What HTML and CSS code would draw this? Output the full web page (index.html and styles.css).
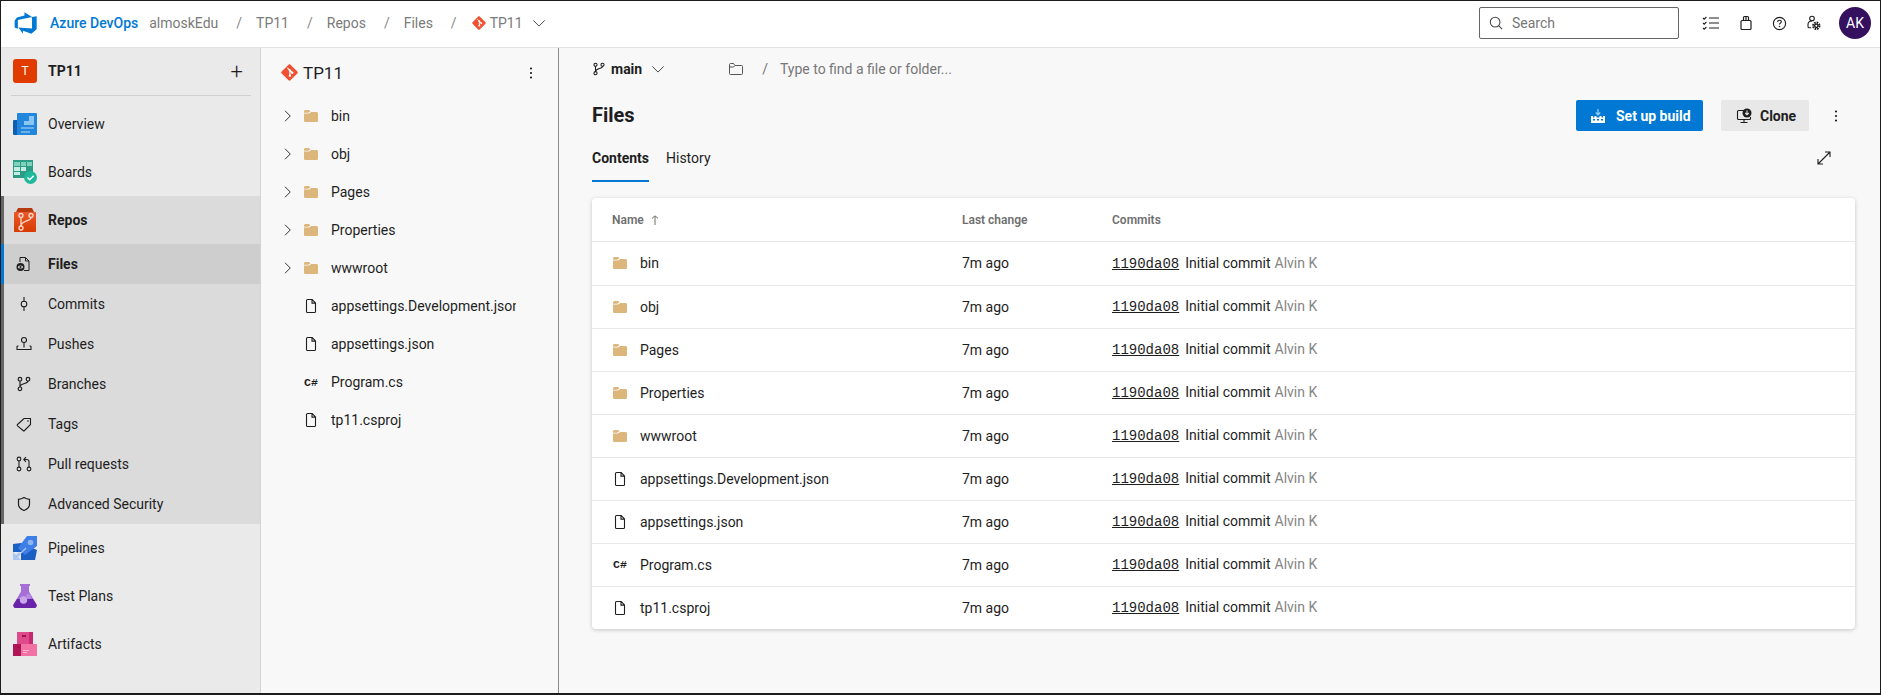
FILE: index.html
```html
<!DOCTYPE html>
<html lang="en">
<head>
    <meta charset="UTF-8">
    <title>Files - Repos</title>
    <link rel="stylesheet" href="styles.css">
</head>
<body>
<svg class="defs" width="0" height="0">
    <symbol id="folder" viewBox="0 0 16 16">
        <path fill="#dcb67a" d="M1 3.600C1 2.700 1.700 2 2.600 2h3c.5 0 .9.2 1.200.6l.6.7-2.200 1.500H1zM1 5.600h5l2.400-1.700h5c.9 0 1.600.7 1.600 1.600v6.900c0 .9-.7 1.600-1.600 1.600H2.600C1.700 14 1 13.300 1 12.400z"/>
    </symbol>
    <symbol id="file" viewBox="0 0 16 16">
        <path fill="none" stroke="#1e1e1e" stroke-width="1.100" d="M3.500 2.600c0-.6.500-1.100 1.100-1.100h4.600l3.300 3.400v8.500c0 .6-.5 1.100-1.100 1.100H4.600c-.6 0-1.100-.5-1.100-1.100zM9 1.600v3.500h3.400"/>
    </symbol>
    <symbol id="git" viewBox="0 0 16 16">
        <path fill="#f05133" d="M.6 7.100 7.100.6c.5-.5 1.300-.5 1.800 0l6.500 6.500c.5.5.5 1.300 0 1.800l-6.500 6.500c-.5.5-1.300.5-1.800 0L.6 8.900c-.5-.5-.5-1.300 0-1.800z"/>
        <path fill="none" stroke="#fff" stroke-width="1.100" d="M6 3.600l2.400 2.400M8.400 6v5M8.400 6l2.200 2.200"/>
        <circle cx="8.400" cy="6" r="1.100" fill="#fff"/><circle cx="8.400" cy="11" r="1.100" fill="#fff"/><circle cx="10.600" cy="8.200" r="1.100" fill="#fff"/>
    </symbol>
    <symbol id="branch" viewBox="0 0 16 16">
        <g fill="none" stroke="#1e1e1e" stroke-width="1.200">
            <circle cx="4" cy="3.200" r="1.800"/><circle cx="4" cy="12.800" r="1.800"/><circle cx="12" cy="3.200" r="1.800"/>
            <path d="M4 5v6M12 5c0 3-8 2-8 6"/>
        </g>
    </symbol>
    <symbol id="chev-right" viewBox="0 0 16 16">
        <path fill="none" stroke="#1e1e1e" stroke-width="1.200" d="M4 1 11 8l-7 7"/>
    </symbol>
    <symbol id="chev-down" viewBox="0 0 16 16">
        <path fill="none" stroke="#444" stroke-width="1.100" d="M1.500 5 8 11.500 14.500 5"/>
    </symbol>
    <symbol id="kebab" viewBox="0 0 16 16">
        <circle cx="8" cy="3.500" r="1.100" fill="#1e1e1e"/><circle cx="8" cy="8" r="1.100" fill="#1e1e1e"/><circle cx="8" cy="12.500" r="1.100" fill="#1e1e1e"/>
    </symbol>
    <linearGradient id="repos-fill" x1="0" y1="0" x2="0" y2="1">
        <stop offset="0" stop-color="#e8592b"/>
        <stop offset="1" stop-color="#d83b01"/>
    </linearGradient>
</svg>

<header class="topbar">
    <svg class="logo" viewBox="0 0 18 18" width="24" height="24">
        <path fill="#0078d4" d="M17 4v9.740l-4 3.280-6.200-2.260V17L3.290 12.410l10.230.8V4.440zm-3.410.49L7.850 1v2.290L2.250 4.940.5 7.200v5.120l2.400 1.060V6.810z"/>
    </svg>
    <span class="brand">Azure DevOps</span>
    <span class="crumb org">almoskEdu</span>
    <span class="sep">/</span><span class="crumb">TP11</span>
    <span class="sep">/</span><span class="crumb">Repos</span>
    <span class="sep">/</span><span class="crumb">Files</span>
    <span class="sep">/</span>
    <svg class="crumb-git" width="14" height="14"><use href="#git"/></svg>
    <span class="crumb">TP11</span>
    <svg class="crumb-chev" width="14" height="14"><use href="#chev-down"/></svg>

    <div class="top-right">
        <div class="search">
            <svg viewBox="0 0 16 16" width="14" height="14"><path fill="none" stroke="#444" stroke-width="1.200" d="M7 1.500a5.500 5.500 0 1 1 0 11 5.500 5.500 0 0 1 0-11zM11 11l4 4"/></svg>
            <span>Search</span>
        </div>
        <svg class="top-icon" viewBox="0 0 18 16" width="18" height="16"><path fill="none" stroke="#1e1e1e" stroke-width="1.100" d="M7 3h10M7 8h10M7 13h10M1 3l1.200 1.200L4.400 2M1 8l1.200 1.200L4.400 7M1 13l1.200 1.200L4.400 12"/></svg>
        <svg class="top-icon" viewBox="0 0 16 16" width="16" height="16"><path fill="none" stroke="#1e1e1e" stroke-width="1.200" d="M3 6.500c0-.6.400-1 1-1h8c.6 0 1 .4 1 1v7c0 .6-.4 1-1 1H4c-.6 0-1-.4-1-1zM5.500 5.500V2.500c0-.6.400-1 1-1h3c.6 0 1 .4 1 1v3M8 1.500v4"/></svg>
        <svg class="top-icon" viewBox="0 0 16 16" width="15" height="15"><circle cx="8" cy="8" r="6.500" fill="none" stroke="#1e1e1e" stroke-width="1.200"/><path fill="none" stroke="#1e1e1e" stroke-width="1.200" d="M6 6.300c0-1.100.9-1.800 2-1.800s2 .7 2 1.700c0 1.300-2 1.400-2 2.900"/><circle cx="8" cy="11.300" r=".8" fill="#1e1e1e"/></svg>
        <svg class="top-icon" viewBox="0 0 16 16" width="16" height="16"><g fill="none" stroke="#1e1e1e" stroke-width="1.100"><circle cx="7" cy="3.500" r="2.300"/><path d="M7 6c-2.500 0-4 1.500-4 3.500v2c0 .8.500 1.300 1.200 1.300h2"/></g><circle cx="11.300" cy="10.800" r="3.200" fill="none" stroke="#1e1e1e" stroke-width="2" stroke-dasharray="1.600 .9"/><circle cx="11.300" cy="10.800" r="2.400" fill="#1e1e1e"/><circle cx="11.300" cy="10.800" r="1" fill="#fff"/></svg>
        <div class="avatar">AK</div>
    </div>
</header>

<div class="layout">
    <nav class="sidebar">
        <div class="project">
            <span class="project-badge">T</span>
            <span class="project-name">TP11</span>
            <span class="project-add">+</span>
        </div>
        <a class="nav-item">
            <svg class="nav-icon" viewBox="0 0 24 24"><path fill="#0f5fb0" d="M0 9a1 1 0 0 1 1-1h8v15H1a1 1 0 0 1-1-1z"/><path fill="#2287dc" d="M4 2a1 1 0 0 1 1-1h18a1 1 0 0 1 1 1v20a1 1 0 0 1-1 1H4z"/><path fill="#8cc4f2" d="M16 4h5v5h-5zM11 9h10v4H11z"/><path fill="#6ab0ea" d="M8 15h13v2H8zM8 19h9v2H8z"/></svg>
            <span>Overview</span>
        </a>
        <a class="nav-item">
            <svg class="nav-icon" viewBox="0 0 24 24"><path fill="#2d9c84" d="M0 0h20v18H0z"/><path fill="#7fd1bd" d="M1 2h6v4H1zM8 2h5v4H8zM14 2h5v4h-5z"/><path fill="#c5ece2" d="M1 7h6v4H1zM8 7h5v4H8zM1 12h6v3H1z"/><circle cx="17.500" cy="17.500" r="6.500" fill="#1fb89b"/><path fill="none" stroke="#fff" stroke-width="1.600" d="M14.500 17.500l2.200 2.200 4-4"/></svg>
            <span>Boards</span>
        </a>
        <div class="nav-group">
            <a class="nav-item nav-bold">
                <svg class="nav-icon" viewBox="0 0 24 24"><path fill="#b8390e" d="M5 0h14l2 4H3z"/><path fill="url(#repos-fill)" d="M1 5c0-.6.400-1 1-1h20c.6 0 1 .4 1 1v18c0 .6-.4 1-1 1H2c-.6 0-1-.4-1-1z"/><g fill="none" stroke="#fbd9cc" stroke-width="1.300"><circle cx="8" cy="7.500" r="2"/><circle cx="18" cy="7.500" r="2"/><circle cx="8" cy="20" r="2"/><path d="M8 9.500v8.500M18 9.500c0 4-10 3-10 8.500"/></g></svg>
                <span>Repos</span>
            </a>
            <a class="sub-item sub-active">
                <svg class="sub-icon" viewBox="0 0 16 16"><path fill="none" stroke="#1e1e1e" stroke-width="1" d="M4 6V1.500h5.500L13 5v9.500H8M9.500 1.500V5H13"/><circle cx="4.500" cy="11" r="4" fill="#1e1e1e"/><ellipse cx="4.500" cy="11" rx="2.700" ry="1.500" fill="#cecece"/><circle cx="4.500" cy="11" r="1" fill="#1e1e1e"/></svg>
                <span>Files</span>
            </a>
            <a class="sub-item">
                <svg class="sub-icon" viewBox="0 0 16 16"><g fill="none" stroke="#1e1e1e" stroke-width="1.100"><circle cx="8" cy="8" r="2.800"/><path d="M8 1v4.200M8 10.800V15"/></g></svg>
                <span>Commits</span>
            </a>
            <a class="sub-item">
                <svg class="sub-icon" viewBox="0 0 16 16"><g fill="none" stroke="#1e1e1e" stroke-width="1.100"><circle cx="8" cy="4" r="2.500"/><path d="M8 6.500v5M1 10v3.500h14V10M1 10h1.500M13.500 10H15"/></g></svg>
                <span>Pushes</span>
            </a>
            <a class="sub-item">
                <svg class="sub-icon" width="16" height="16"><use href="#branch"/></svg>
                <span>Branches</span>
            </a>
            <a class="sub-item">
                <svg class="sub-icon" viewBox="0 0 16 16"><path fill="none" stroke="#1e1e1e" stroke-width="1.100" d="M1.500 8.500 8 2.500h6.500v6l-6 6a1 1 0 0 1-1.400 0L1.500 9.900a1 1 0 0 1 0-1.400z"/><circle cx="12" cy="5" r=".8" fill="#1e1e1e"/></svg>
                <span>Tags</span>
            </a>
            <a class="sub-item">
                <svg class="sub-icon" viewBox="0 0 16 16"><g fill="none" stroke="#1e1e1e" stroke-width="1.100"><circle cx="3" cy="3" r="1.900"/><circle cx="3" cy="13" r="1.900"/><circle cx="13" cy="13" r="1.900"/><path d="M3 5v6M13 11V5.500c0-1.500-1-2-2.500-2H8M10 1.200 7.800 3.500 10 5.800"/></g></svg>
                <span>Pull requests</span>
            </a>
            <a class="sub-item">
                <svg class="sub-icon" viewBox="0 0 16 16"><path fill="none" stroke="#1e1e1e" stroke-width="1.200" d="M8 1.500c1.500 1 3.300 1.700 5.500 1.800v5c0 3-2.500 5-5.500 6.200-3-1.200-5.500-3.200-5.500-6.200v-5C4.700 3.200 6.500 2.500 8 1.500z"/></svg>
                <span>Advanced Security</span>
            </a>
        </div>
        <a class="nav-item">
            <svg class="nav-icon" viewBox="0 0 24 24"><path fill="#1a5fc4" d="M8 7 0 8v8h8l0 8h14l2-10z"/><path fill="#3d7fe6" d="M24 0H14L5 12l7 7 12-9z"/><circle cx="17.500" cy="6.500" r="2.800" fill="#8fb5f2"/><path fill="#a9c6f5" d="M0 24v-8l3 3 3-3 2 2-3 3 3 3z"/><path stroke="#a9c6f5" stroke-width="1.200" d="M8 17l5-5"/></svg>
            <span>Pipelines</span>
        </a>
        <a class="nav-item">
            <svg class="nav-icon" viewBox="0 0 24 24"><path fill="#a56fd6" d="M7 0h10v2h-1v5.500L23.500 20.500c.6 1.500-.4 3.500-2 3.500H2.500c-1.600 0-2.600-2-2-3.500L8 7.500V2H7z"/><path fill="#6a22a8" d="M4 15h16l3.500 5.500c.6 1.500-.4 3.500-2 3.500H2.500c-1.600 0-2.600-2-2-3.500z"/><circle cx="10.500" cy="16" r="3.700" fill="#c8a6ea"/><circle cx="15.500" cy="12.500" r="2.500" fill="#b98ce3"/></svg>
            <span>Test Plans</span>
        </a>
        <a class="nav-item">
            <svg class="nav-icon" viewBox="0 0 24 24"><path fill="#c9296f" d="M4 0h16v12H4z"/><path fill="#df4a8c" d="M4 0h12v12H4z"/><path fill="#b01556" d="M0 12h10v12H0z"/><path fill="#f272a6" d="M8 12h16v12H8z"/><path fill="#fbb3cf" d="M10 18h6v1h-6zM10 20h4v1h-4z"/><path fill="#a3104c" d="M9 3h4v2H9zM4 14h3v2H4z"/></svg>
            <span>Artifacts</span>
        </a>
    </nav>

    <aside class="tree">
        <div class="tree-head">
            <svg width="17" height="17"><use href="#git"/></svg>
            <span class="tree-title">TP11</span>
            <svg class="tree-more" width="16" height="16"><use href="#kebab"/></svg>
        </div>
        <div class="tree-row"><svg class="tree-chev" width="12" height="12"><use href="#chev-right"/></svg><svg width="16" height="16"><use href="#folder"/></svg><span>bin</span></div>
        <div class="tree-row"><svg class="tree-chev" width="12" height="12"><use href="#chev-right"/></svg><svg width="16" height="16"><use href="#folder"/></svg><span>obj</span></div>
        <div class="tree-row"><svg class="tree-chev" width="12" height="12"><use href="#chev-right"/></svg><svg width="16" height="16"><use href="#folder"/></svg><span>Pages</span></div>
        <div class="tree-row"><svg class="tree-chev" width="12" height="12"><use href="#chev-right"/></svg><svg width="16" height="16"><use href="#folder"/></svg><span>Properties</span></div>
        <div class="tree-row"><svg class="tree-chev" width="12" height="12"><use href="#chev-right"/></svg><svg width="16" height="16"><use href="#folder"/></svg><span>wwwroot</span></div>
        <div class="tree-row tree-file"><svg width="16" height="16"><use href="#file"/></svg><span>appsettings.Development.json</span></div>
        <div class="tree-row tree-file"><svg width="16" height="16"><use href="#file"/></svg><span>appsettings.json</span></div>
        <div class="tree-row tree-file"><span class="cs-icon">C#</span><span>Program.cs</span></div>
        <div class="tree-row tree-file"><svg width="16" height="16"><use href="#file"/></svg><span>tp11.csproj</span></div>
    </aside>

    <main class="main">
        <div class="pathbar">
            <svg width="14" height="14"><use href="#branch"/></svg>
            <span class="branch-name">main</span>
            <svg class="branch-chev" width="14" height="14"><use href="#chev-down"/></svg>
            <svg class="path-folder" viewBox="0 0 16 16" width="16" height="16"><path fill="none" stroke="#555" stroke-width="1" d="M1.500 3.500c0-.6.400-1 1-1h3l1.500 2h6.500c.6 0 1 .4 1 1v7c0 .6-.4 1-1 1h-11c-.6 0-1-.4-1-1zM1.500 6h4l1.500-1.500"/></svg>
            <span class="path-sep">/</span>
            <span class="path-input">Type to find a file or folder...</span>
        </div>
        <div class="title-row">
            <h1>Files</h1>
            <button class="btn btn-primary">
                <svg viewBox="0 0 16 16" width="16" height="16"><path fill="#fff" d="M1 8h2v1.500h1.500V8h2v1.500h3V8h2v1.500H13V8h2v7H1zM3 11v1.500h2V11zM7 11v1.500h2V11zM11 11v1.500h2V11z"/><path stroke="#9fd0f5" stroke-width="1.200" fill="none" d="M8 1v5.500M5.800 4.500 8 6.800l2.200-2.300"/></svg>
                Set up build
            </button>
            <button class="btn btn-plain">
                <svg viewBox="0 0 16 16" width="16" height="16"><path fill="none" stroke="#1e1e1e" stroke-width="1.100" d="M8 2.500H2.500c-.6 0-1 .4-1 1v7c0 .6.400 1 1 1h11c.6 0 1-.4 1-1V9M8 11.500v3M4.500 14.500h7"/><circle cx="11" cy="5" r="4.500" fill="#1e1e1e"/><path stroke="#e8e8e8" stroke-width="1.100" fill="none" d="M11 2.500v4M9.300 5l1.700 1.800L12.700 5"/></svg>
                Clone
            </button>
            <svg class="title-more" width="16" height="16"><use href="#kebab"/></svg>
        </div>
        <div class="tabs">
            <span class="tab tab-active">Contents</span>
            <span class="tab">History</span>
            <svg class="expand" viewBox="0 0 14 14" width="14" height="14"><path fill="none" stroke="#1e1e1e" stroke-width="1.100" d="M1 8v5h5M1 13 13 1M8 1h5v5"/></svg>
        </div>

        <table class="card">
            <thead>
                <tr><th class="col-name">Name <svg class="sort" viewBox="0 0 8 10" width="8" height="10"><path fill="none" stroke="#6f6f6f" stroke-width="1" d="M4 10V1M1 3.500 4 .8l3 2.700"/></svg></th><th class="col-time">Last change</th><th>Commits</th></tr>
            </thead>
            <tbody>
                <tr><td><div class="name"><svg width="16" height="16"><use href="#folder"/></svg>bin</div></td><td>7m ago</td><td><a class="hash">1190da08</a><span class="msg">Initial commit</span><span class="author">Alvin K</span></td></tr>
                <tr><td><div class="name"><svg width="16" height="16"><use href="#folder"/></svg>obj</div></td><td>7m ago</td><td><a class="hash">1190da08</a><span class="msg">Initial commit</span><span class="author">Alvin K</span></td></tr>
                <tr><td><div class="name"><svg width="16" height="16"><use href="#folder"/></svg>Pages</div></td><td>7m ago</td><td><a class="hash">1190da08</a><span class="msg">Initial commit</span><span class="author">Alvin K</span></td></tr>
                <tr><td><div class="name"><svg width="16" height="16"><use href="#folder"/></svg>Properties</div></td><td>7m ago</td><td><a class="hash">1190da08</a><span class="msg">Initial commit</span><span class="author">Alvin K</span></td></tr>
                <tr><td><div class="name"><svg width="16" height="16"><use href="#folder"/></svg>wwwroot</div></td><td>7m ago</td><td><a class="hash">1190da08</a><span class="msg">Initial commit</span><span class="author">Alvin K</span></td></tr>
                <tr><td><div class="name"><svg width="16" height="16"><use href="#file"/></svg>appsettings.Development.json</div></td><td>7m ago</td><td><a class="hash">1190da08</a><span class="msg">Initial commit</span><span class="author">Alvin K</span></td></tr>
                <tr><td><div class="name"><svg width="16" height="16"><use href="#file"/></svg>appsettings.json</div></td><td>7m ago</td><td><a class="hash">1190da08</a><span class="msg">Initial commit</span><span class="author">Alvin K</span></td></tr>
                <tr><td><div class="name"><span class="cs-icon">C#</span>Program.cs</div></td><td>7m ago</td><td><a class="hash">1190da08</a><span class="msg">Initial commit</span><span class="author">Alvin K</span></td></tr>
                <tr><td><div class="name"><svg width="16" height="16"><use href="#file"/></svg>tp11.csproj</div></td><td>7m ago</td><td><a class="hash">1190da08</a><span class="msg">Initial commit</span><span class="author">Alvin K</span></td></tr>
            </tbody>
        </table>
    </main>
</div>
</body>
</html>
```

FILE: styles.css
```css
* {
    box-sizing: border-box;
}
html, body {
    height: 100%;
}
body {
    margin: 0;
    overflow: hidden;
    display: flex;
    flex-direction: column;
    border: 1px solid #1c1c1c;
    border-bottom-width: 2px;
    font-family: Roboto, "Liberation Sans", sans-serif;
    font-size: 14px;
    color: #1e1e1e;
    background-color: #fff;
}
svg {
    flex: none;
}
.defs {
    position: absolute;
}

/* top bar */
.topbar {
    flex: none;
    height: 47px;
    display: flex;
    align-items: center;
    padding: 0 0 2px 13px;
    border-bottom: 1px solid #e3e3e3;
    color: #7a7a7a;
}
.brand {
    margin-left: 12px;
    font-weight: 500;
    color: #0078d4;
}
.org {
    margin-left: 11px;
}
.sep {
    margin: 0 14px 0 18px;
    color: #8a8a8a;
}
.crumb-git {
    margin-left: 1px;
    margin-right: 4px;
}
.crumb-chev {
    margin-left: 9px;
}
.top-right {
    margin-left: auto;
    display: flex;
    align-items: center;
}
.search {
    width: 200px;
    height: 32px;
    display: flex;
    align-items: center;
    gap: 9px;
    padding-left: 9px;
    margin-right: 23px;
    border: 1px solid #666;
    border-radius: 2px;
    color: #777;
}
.top-icon {
    margin-right: 18px;
}
.avatar {
    width: 32px;
    height: 32px;
    margin-right: 9px;
    border-radius: 50%;
    background-color: #35105f;
    color: #fff;
    text-align: center;
    line-height: 32px;
}

.layout {
    flex: 1;
    min-height: 0;
    display: flex;
}

/* left nav */
.sidebar {
    flex: none;
    width: 260px;
    background-color: #eaeaea;
    border-right: 1px solid #d4d4d4;
}
.project {
    height: 48px;
    margin: 0 9px 4px 10px;
    padding: 0 0 1px 2px;
    display: flex;
    align-items: center;
    border-bottom: 1px solid #d0d0d0;
}
.project-badge {
    width: 24px;
    height: 24px;
    margin-right: 11px;
    border-radius: 3px;
    background-color: #e03c00;
    color: #fff;
    font-size: 12px;
    text-align: center;
    line-height: 24px;
}
.project-name {
    font-weight: 700;
}
.project-add {
    margin-left: auto;
    margin-right: 8px;
    font-size: 22px;
    font-weight: 300;
}
.nav-item {
    height: 48px;
    display: flex;
    align-items: center;
    padding-left: 12px;
}
.nav-item span {
    margin-left: 11px;
}
.nav-icon {
    width: 24px;
    height: 24px;
}
.nav-bold {
    font-weight: 700;
}
.nav-group {
    background-color: #dbdbdb;
    border-left: 3px solid #666;
}
.nav-group .nav-item {
    padding-left: 9px;
}
.sub-item {
    height: 40px;
    display: flex;
    align-items: center;
    padding-left: 12px;
}
.sub-item span {
    margin-left: 16px;
}
.sub-icon {
    width: 16px;
    height: 16px;
}
.sub-active {
    margin-left: -3px;
    border-left: 3px solid #0078d4;
    background-color: #cecece;
    font-weight: 700;
}

/* file tree */
.tree {
    flex: none;
    width: 298px;
    background-color: #f8f8f8;
    border-right: 1px solid #8a8a8a;
    overflow: hidden;
}
.tree-head {
    height: 49px;
    display: flex;
    align-items: center;
    padding: 0 19px 0 20px;
}
.tree-title {
    margin-left: 5px;
    font-size: 17px;
}
.tree-more {
    margin-left: auto;
}
.tree-row {
    height: 38px;
    display: flex;
    align-items: center;
    width: 255px;
    padding-left: 21px;
    white-space: nowrap;
    overflow: hidden;
}
.tree-chev {
    margin-right: 9px;
}
.tree-row span:last-child {
    margin-left: 12px;
}
.tree-file {
    padding-left: 42px;
}
.cs-icon {
    flex: none;
    width: 16px;
    font-family: "Liberation Mono", monospace;
    font-size: 11.500px;
    font-weight: 700;
    color: #1e1e1e;
    text-align: center;
}

/* main pane */
.main {
    flex: 1;
    min-width: 0;
    background-color: #f8f8f8;
    padding: 0 25px 0 33px;
}
.pathbar {
    height: 42px;
    display: flex;
    align-items: center;
}
.branch-name {
    margin-left: 5px;
    font-weight: 700;
}
.branch-chev {
    margin-left: 9px;
}
.path-folder {
    margin-left: 63px;
}
.path-sep {
    margin-left: 18px;
    color: #777;
}
.path-input {
    margin-left: 12px;
    color: #777;
}
.title-row {
    height: 41px;
    margin-top: 5px;
    display: flex;
    align-items: center;
}
h1 {
    margin: -2px auto 0 0;
    font-size: 20px;
    font-weight: 700;
}
.btn {
    height: 31px;
    display: flex;
    align-items: center;
    padding: 0 14px;
    border: none;
    border-radius: 2px;
    font-family: inherit;
    font-size: 14px;
    font-weight: 700;
    white-space: nowrap;
}
.btn-primary {
    width: 127px;
    gap: 10px;
    background-color: #0078d4;
    color: #fff;
}
.btn-plain {
    width: 88px;
    margin-left: 18px;
    padding-left: 15px;
    gap: 8px;
    background-color: #e8e8e8;
    color: #1e1e1e;
}
.title-more {
    margin-left: 19px;
    margin-right: 11px;
}
.tabs {
    height: 46px;
    display: flex;
    gap: 17px;
    padding-top: 12px;
}
.tab {
    height: 34px;
    line-height: 20px;
}
.tab-active {
    font-weight: 700;
    border-bottom: 2px solid #0078d4;
}
.expand {
    margin-left: auto;
    margin-right: 24px;
    margin-top: 3px;
}

/* commits table */
.card {
    width: 1263px;
    margin-top: 16px;
    background-color: #fff;
    border-collapse: collapse;
    border-radius: 4px;
    box-shadow: 0 1px 4px rgba(0,0,0,0.2);
    table-layout: fixed;
}
th {
    height: 43px;
    padding: 2px 0 0;
    text-align: left;
    font-size: 12px;
    font-weight: 600;
    color: #6f6f6f;
}
td {
    height: 43px;
    padding: 0;
    border-top: 1px solid #e8e8e8;
}
tbody tr:first-child td {
    height: 44px;
}
.col-name {
    width: 370px;
    padding-left: 20px;
}
.col-time {
    width: 150px;
}
.sort {
    margin-left: 4px;
    vertical-align: -1px;
}
.name {
    display: flex;
    align-items: center;
    padding-left: 20px;
    gap: 12px;
}
.hash {
    font-family: "Liberation Mono", monospace;
    text-decoration: underline;
}
.msg {
    margin-left: 6px;
}
.author {
    margin-left: 4px;
    color: #858585;
}
```
